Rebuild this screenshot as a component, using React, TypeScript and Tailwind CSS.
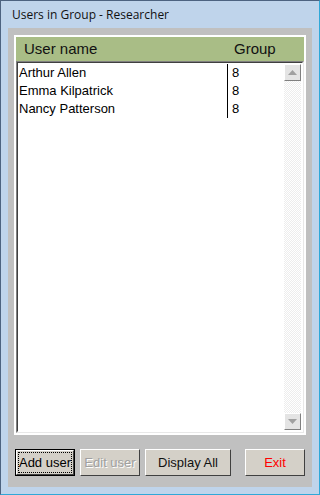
// App.tsx - "Users in Group" dialog, classic Windows look.

const users = [
  { name: "Arthur Allen", group: "8" },
  { name: "Emma Kilpatrick", group: "8" },
  { name: "Nancy Patterson", group: "8" },
];

const raised =
  "bg-[#d4d0c8] border border-t-white border-l-white border-r-[#404040] border-b-[#404040]";

function ArrowButton({ up }: { up?: boolean }) {
  return (
    <div className="w-[17px] h-[17px] bg-[#e4e4e4] border border-t-white border-l-white border-r-[#808080] border-b-[#808080] flex items-center justify-center">
      <svg width="9" height="5" viewBox="0 0 9 5">
        {up ? (
          <polygon points="4.5,0 9,5 0,5" fill="#a0a0a0" />
        ) : (
          <polygon points="0,0 9,0 4.5,5" fill="#a0a0a0" />
        )}
      </svg>
    </div>
  );
}

export default function App() {
  return (
    <div className="w-[320px] h-[495px] bg-[#bfd4eb] border border-[#4d6380] border-r-[#2fa8d8] border-b-[#2fa8d8] flex flex-col font-['Liberation_Sans',Arial,sans-serif]">
      {/* 타이틀 바 */}
      <div className="h-[27px] pl-[11px] pt-[8px] text-[12px] leading-none text-[#111] font-['Open_Sans',sans-serif]">
        Users in Group - Researcher
      </div>

      {/* 클라이언트 영역 */}
      <div className="mx-[7px] mb-[7px] flex-1 bg-[#c0c0c0] flex flex-col pt-[7px] px-[6px]">
        <div className="h-[400px] border-2 border-white flex flex-col">
          {/* 헤더 */}
          <div className="h-[24px] bg-[#a9bd86] flex items-center text-[15px] text-[#111]">
            <div className="w-[212px] pl-[8px]">User name</div>
            <div className="pl-[6px]">Group</div>
          </div>

          {/* 목록 */}
          <div className="flex-1 border border-[#808080] border-r-[#e8e8e8] border-b-[#e8e8e8] flex">
            <div className="flex-1 bg-white border border-[#404040] border-r-white border-b-white flex">
              <div className="flex-1 pt-[1px]">
                {users.map((u, i) => (
                  <div key={i} className="h-[18px] flex items-center text-[13px] text-black">
                    <div className="w-[210px] pl-[1px] h-full flex items-center border-r border-black">
                      {u.name}
                    </div>
                    <div className="pl-[4px]">{u.group}</div>
                  </div>
                ))}
              </div>
              <div className="w-[17px] flex flex-col mt-[1px] mb-[1px] mr-[1px]">
                <ArrowButton up />
                <div className="flex-1 bg-[repeating-conic-gradient(#ffffff_0%_25%,#ededed_0%_50%)] bg-size-[2px_2px]" />
                <ArrowButton />
              </div>
            </div>
          </div>
        </div>

        {/* 버튼 */}
        <div className="mt-[14px] flex text-[13px] leading-none whitespace-nowrap">
          <div className="ml-[1px] w-[60px] h-[27px] border border-black">
            <div className={`${raised} h-full flex items-center justify-center`}>
              <span className="border border-dotted border-black py-[3px] text-black">
                Add user
              </span>
            </div>
          </div>
          <div className={`${raised} ml-[5px] w-[60px] h-[27px] flex items-center justify-center text-[#a0a0a0] [text-shadow:1px_1px_0_#ffffff]`}>
            Edit user
          </div>
          <div className={`${raised} ml-[5px] w-[86px] h-[27px] flex items-center justify-center text-[#111]`}>
            Display All
          </div>
          <div className={`${raised} ml-[14px] w-[60px] h-[27px] flex items-center justify-center text-[#ff0000]`}>
            Exit
          </div>
        </div>
      </div>
    </div>
  );
}
